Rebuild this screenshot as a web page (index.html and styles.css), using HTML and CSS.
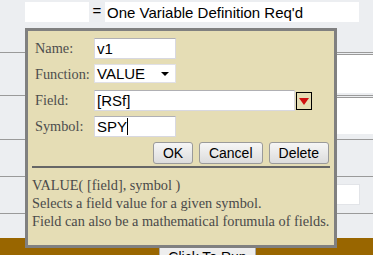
FILE: index.html
```html
<!DOCTYPE html>
<html lang="en">
  <head>
    <meta charset="UTF-8" />
    <title>Variable Definition</title>
    <link rel="stylesheet" href="styles.css">
  </head>
  <body>
    <div id="page">
      <div class="top">
        <div class="box small"></div>
        <span class="eq">=</span>
        <div class="box wide">One Variable Definition Req'd</div>
      </div>
      <div class="rows">
        <div class="row r1"><div class="area"></div></div>
        <div class="row r2"><div class="area a2"></div></div>
        <div class="row r3"></div>
        <div class="row r4"><div class="line-input"></div></div>
        <div class="row r5"></div>
      </div>
      <div class="footer">
        <button class="run">Click To Run</button>
      </div>
    </div>

    <!-- dialog over the page -->
    <div class="dialog">
      <div class="form">
        <label>Name:</label>
        <div class="field"><input class="txt short" type="text" value="v1"></div>
        <label>Function:</label>
        <div class="field f-sel">
          <div class="select short">VALUE<span class="arrow"></span></div>
        </div>
        <label>Field:</label>
        <div class="field">
          <input class="txt long" type="text" value="[RSf]">
          <span class="drop"><svg width="12" height="10" viewBox="0 0 12 10"><polygon points="1,2 11,2 6,9" fill="#d01010"/></svg></span>
        </div>
        <label>Symbol:</label>
        <div class="field">
          <div class="txt short fake">SPY<span class="caret"></span></div>
        </div>
      </div>
      <div class="btns">
        <button>OK</button>
        <button>Cancel</button>
        <button>Delete</button>
      </div>
      <div class="sep"></div>
      <div class="desc">
        <p>VALUE( [field], symbol )</p>
        <p>Selects a field value for a given symbol.</p>
        <p>Field can also be a mathematical forumula of fields.</p>
      </div>
    </div>
  </body>
</html>
```
FILE: styles.css
```css
* {
  margin: 0;
  padding: 0;
  box-sizing: border-box;
}
body {
  background: #eceef1;
  font-family: "Liberation Sans", Arial, sans-serif;
  width: 373px;
  height: 255px;
  overflow: hidden;
  position: relative;
}
.top {
  display: flex;
  align-items: flex-start;
  padding: 2px 14px 0 25px;
  height: 22px;
}
.top .box {
  background: #fff;
  height: 20px;
}
.top .small {
  width: 64px;
}
.top .eq {
  width: 16px;
  text-align: center;
  font-size: 15px;
  line-height: 18px;
}
.top .wide {
  flex: 1;
  font-size: 15px;
  line-height: 21px;
  padding-left: 2px;
}
.rows {
  margin-top: 30px;
}
.row {
  border-top: 1px solid #9a9a9a;
}
.r1 { height: 43px; }
.r2 { height: 44px; }
.r3 { height: 37px; }
.r4 { height: 37px; }
.r5 { height: 25px; }
.area {
  margin: 1px 0 0 200px;
  height: 39px;
  background: #fff;
  border-top: 1px solid #9a9a9a;
}
.area.a2 {
  height: 37px;
}
.line-input {
  margin: 7px 13px 0 200px;
  height: 21px;
  background: #fff;
  border: 1px solid #e2e4e8;
}
.footer {
  background: #996600;
  height: 17px;
  padding-left: 159px;
  padding-top: 9px;
}
.run {
  width: 97px;
  height: 20px;
  font-family: "Liberation Sans", Arial, sans-serif;
  font-size: 14px;
  border: 1px solid #aaa;
  background: #eee;
}

.dialog {
  position: absolute;
  left: 25px;
  top: 28px;
  width: 312px;
  height: 220px;
  background: #e5ddb5;
  border: 3px solid #808080;
  padding: 7px 4px 0 4px;
}
.form {
  display: grid;
  grid-template-columns: 59px auto;
  row-gap: 5px;
  padding-left: 3px;
}
.form label {
  font-family: "Liberation Serif", "Times New Roman", serif;
  font-size: 14.3px;
  color: #4d4d4d;
  line-height: 21px;
}
.field {
  display: flex;
  align-items: center;
  height: 21px;
}
.field.f-sel {
  height: 19px;
}
.txt {
  height: 21px;
  border: 1px solid #d8d8e0;
  border-top-color: #b0b0b4;
  background: #fff;
  font-family: "Liberation Sans", Arial, sans-serif;
  font-size: 15px;
  padding-left: 2px;
  color: #000;
  outline: none;
}
.short {
  width: 82px;
}
.long {
  width: 201px;
}
.fake {
  line-height: 19px;
}
.caret {
  display: inline-block;
  width: 1px;
  height: 17px;
  background: #000;
  vertical-align: -3px;
}
.select {
  height: 19px;
  background: #fff;
  border: 1px solid #e0e0e6;
  font-size: 15px;
  line-height: 17px;
  padding-left: 2px;
  position: relative;
}
.select .arrow {
  position: absolute;
  right: 6px;
  top: 7px;
  border-left: 4px solid transparent;
  border-right: 4px solid transparent;
  border-top: 4px solid #000;
}
.drop {
  margin-left: 1px;
  width: 16px;
  height: 18px;
  border: 1px solid #000;
  display: flex;
  align-items: center;
  justify-content: center;
}
.btns {
  display: flex;
  justify-content: flex-end;
  gap: 6px;
  margin-top: 5px;
  padding-right: 1px;
}
.btns button {
  height: 22px;
  padding: 0 9px;
  font-family: "Liberation Sans", Arial, sans-serif;
  font-size: 14px;
  color: #000;
  border: 1px solid #9a9a9a;
  border-radius: 3px;
  background: linear-gradient(#f6f6f6, #dcdcdc);
}
.btns button:first-child {
  width: 40px;
}
.sep {
  margin-top: 2px;
  border-top: 2px solid #666;
}
.desc {
  margin-top: 8px;
  font-family: "Liberation Serif", "Times New Roman", serif;
  font-size: 14.3px;
  line-height: 18px;
  color: #4a4a4a;
}
```
